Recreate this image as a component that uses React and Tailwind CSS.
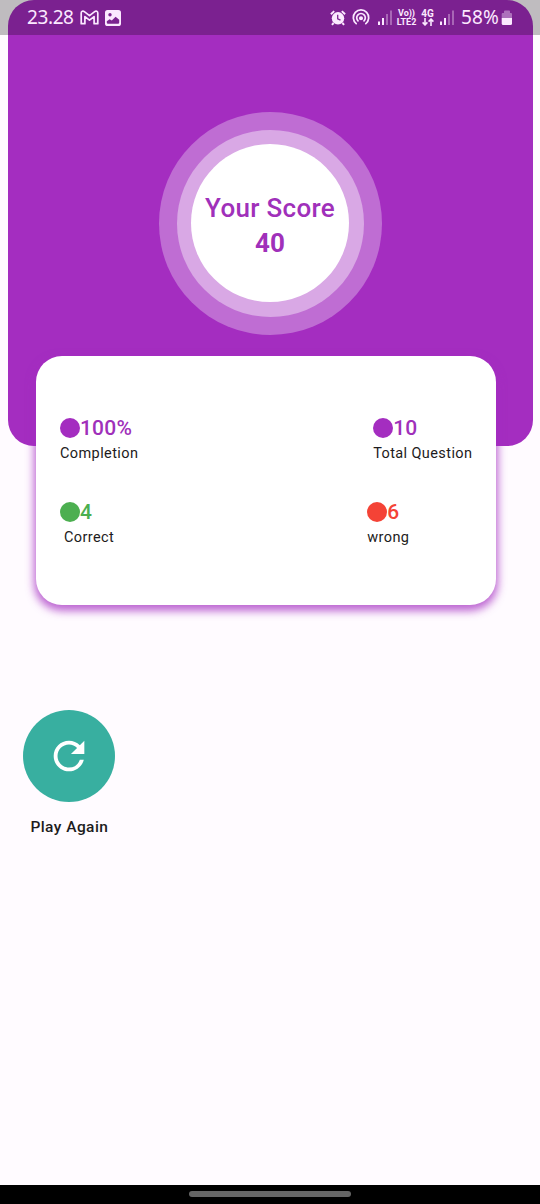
import React from 'react';
import { MdRefresh } from 'react-icons/md';

function Signal() {
  return (
    <svg width="15" height="16" viewBox="0 0 15 16" fill="#fbe9ff">
      <rect x="0" y="11.5" width="2" height="3.5" />
      <rect x="4" y="8" width="2" height="7" />
      <rect x="8" y="4" width="2" height="11" opacity=".35" />
      <rect x="12" y="0.5" width="2" height="14.5" opacity=".35" />
    </svg>
  );
}

function StatusBar() {
  return (
    <div className="absolute inset-x-0 top-0 z-10 flex h-[35px] items-center bg-black/25 font-['Noto_Sans',sans-serif] text-[#fbe9ff]">
      <span className="ml-[27px] w-[53px] whitespace-nowrap text-[19px] leading-[35px] tracking-[-0.4px]">23.28</span>
      <svg width="19" height="15" viewBox="0 0 19 15" fill="none" stroke="#fbe9ff" strokeWidth="1.7" strokeLinejoin="round">
        <path d="M1.2 13.7V3C1.2 1.2 3 .7 4.3 1.7L9.5 5.7l5.2-4C16 .7 17.8 1.2 17.8 3v10.7h-3.7V6.6L9.5 10.2 4.9 6.6v7.1z" />
      </svg>
      <svg className="ml-[6px]" width="16" height="16" viewBox="0 0 16 16">
        <rect width="16" height="16" rx="2.6" fill="#fbe9ff" />
        <circle cx="5" cy="4.8" r="1.7" fill="#7b2490" />
        <path d="M1.8 12.5V11.2L4.6 9.2l2.2 1.4L10.6 6.8l3.6 3v2.7q0 1.2-1.2 1.2H3q-1.2 0-1.2-1.2z" fill="#7b2490" />
      </svg>
      <svg className="ml-[209px]" width="16" height="16" viewBox="0 0 16 16" fill="none" stroke="#fbe9ff">
        <circle cx="8" cy="8.3" r="6.2" fill="#fbe9ff" stroke="none" />
        <path d="M.9 4.2 4.2 1.1M15.1 4.2 11.8 1.1M3.6 13 1.9 14.9M12.4 13l1.7 1.9" strokeWidth="1.9" />
        <path d="M7.7 4.8v4l2.8 1.4" stroke="#7b2490" strokeWidth="1.3" />
      </svg>
      <svg className="ml-[6px]" width="18" height="17" viewBox="0 0 18 17" fill="none" stroke="#fbe9ff" strokeWidth="1.7" strokeLinecap="round">
        <path d="M4.2 14.6a7.7 7.7 0 1 1 9.6 0" />
        <path d="M6 11.9a4.3 4.3 0 1 1 6 0" />
        <circle cx="9" cy="9.3" r="1.2" fill="#fbe9ff" />
      </svg>
      <div className="ml-[8px]"><Signal /></div>
      <div className="ml-[3px] flex w-[21px] flex-col items-center whitespace-nowrap font-[Roboto,sans-serif] text-[9px] font-bold leading-[9px]">
        <span>Vo))</span>
        <span>LTE2</span>
      </div>
      <div className="ml-[4px] flex w-[13px] flex-col items-center font-[Roboto,sans-serif] text-[10px] font-bold leading-[9px]">
        <span>4G</span>
        <svg width="12" height="8" viewBox="0 0 12 8" fill="none" stroke="#fbe9ff" strokeWidth="1.6">
          <path d="M3 0v7M.6 4.4 3 6.9l2.4-2.5M9 8V1M6.6 3.6 9 1.1l2.4 2.5" />
        </svg>
      </div>
      <div className="ml-[6px]"><Signal /></div>
      <span className="ml-[6px] w-[40px] whitespace-nowrap text-[19px] leading-[35px] tracking-[0.1px]">58%</span>
      <svg width="12" height="16" viewBox="0 0 12 16" fill="#fbe9ff">
        <path d="M3 1.5Q3 .5 4 .5h4q1 0 1 1V3h1q1 0 1 1v4H.7V4q0-1 1-1H3z" opacity=".4" />
        <path d="M.7 8H11v5.5q0 1.5-1.5 1.5H2.2Q.7 15 .7 13.5z" />
      </svg>
    </div>
  );
}

function Stat({ value, label, dot, color, labelClass = '' }) {
  return (
    <div className="flex flex-col items-start">
      <div className={`flex h-[26px] items-center text-[21px] font-medium leading-[26px] tracking-[0.2px] ${color}`}>
        <span className={`size-[20px] rounded-full ${dot}`} />
        <span>{value}</span>
      </div>
      <span className={`whitespace-nowrap text-[14.5px] leading-[26px] tracking-[0.4px] text-[#1d1b20] ${labelClass}`}>{label}</span>
    </div>
  );
}

export default function App() {
  return (
    <div className="relative flex h-[1204px] w-[540px] flex-col overflow-hidden bg-[#fffbff] font-[Roboto,sans-serif]">
      <StatusBar />
      <header className="mx-[7.5px] flex h-[446px] shrink-0 justify-center rounded-[26px] bg-[#a42dc0] pt-[111.5px]">
        <div className="flex size-[223px] items-center justify-center rounded-full bg-[#bf6dd3]">
          <div className="flex size-[187px] items-center justify-center rounded-full bg-[#d9a8e5]">
            <div className="flex size-[158px] flex-col items-center justify-center rounded-full bg-white pt-[6px] text-[26px] leading-[35px] text-[#a030ba]">
              <span className="whitespace-nowrap font-medium tracking-[0.3px]">Your Score</span>
              <span className="font-bold">40</span>
            </div>
          </div>
        </div>
      </header>

      <section className="relative ml-[36.4px] mt-[-90px] flex h-[249px] w-[459.5px] shrink-0 flex-col gap-[32px] rounded-[26px] bg-white pl-[23.6px] pr-[23.5px] pt-[59px] shadow-[0_4px_8px_2px_rgba(164,45,192,0.72)]">
        <div className="flex justify-between">
          <Stat value="100%" label="Completion" dot="bg-[#a42dc0]" color="text-[#a030ba]" />
          <Stat value="10" label="Total Question" dot="bg-[#a42dc0]" color="text-[#a030ba]" />
        </div>
        <div className="flex justify-between pr-[63px]">
          <Stat value="4" label="Correct" dot="bg-[#4caf50]" color="text-[#4caf50]" labelClass="ml-[4px]" />
          <Stat value="6" label="wrong" dot="bg-[#f44336]" color="text-[#f44336]" />
        </div>
      </section>

      <div className="ml-[23.4px] mt-[105px] flex w-[92px] flex-col items-center">
        <button className="flex size-[92px] items-center justify-center rounded-full bg-[#38afa0] text-white">
          <MdRefresh size={46} />
        </button>
        <span className="mt-[14px] whitespace-nowrap text-[15.5px] font-medium leading-[22px] tracking-[0.45px] text-[#1d1b20]">Play Again</span>
      </div>

      <footer className="mt-auto flex h-[19px] shrink-0 justify-center bg-black pt-[6px]">
        <div className="h-[6px] w-[162px] rounded-full bg-[#666]" />
      </footer>
    </div>
  );
}
